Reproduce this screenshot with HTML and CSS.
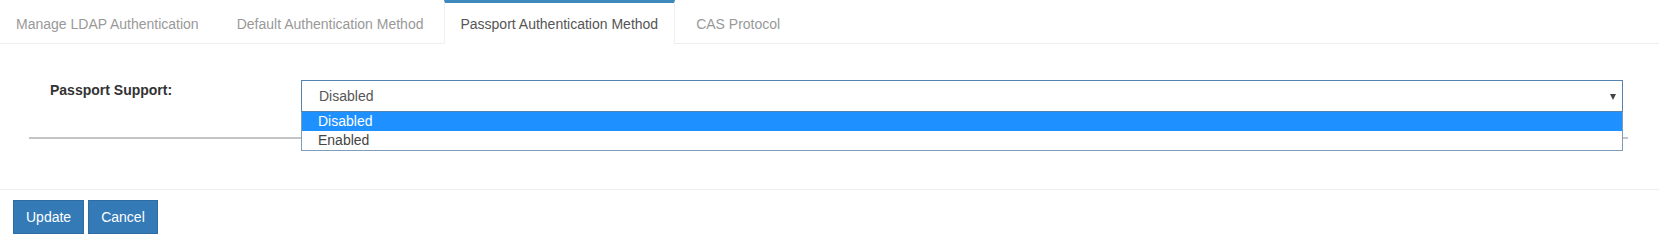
FILE: index.html
```html
<!DOCTYPE html>
<html>
<head>
<meta charset="utf-8">
<link rel="stylesheet" href="styles.css">
</head>
<body>
<div class="tabs">
  <div class="tab tab-1">Manage LDAP Authentication</div>
  <div class="tab">Default Authentication Method</div>
  <div class="tab active">Passport Authentication Method</div>
  <div class="tab">CAS Protocol</div>
</div>
<div class="content">
  <div class="form-row">
    <div class="label">Passport Support:</div>
    <div class="select">
      <div class="select-box">
        <span class="select-value">Disabled</span>
        <span class="arrow"></span>
      </div>
      <div class="options">
        <div class="option selected">Disabled</div>
        <div class="option">Enabled</div>
      </div>
    </div>
  </div>
  <div class="rule"></div>
</div>
<div class="footer">
  <button class="btn">Update</button>
  <button class="btn">Cancel</button>
</div>
</body>
</html>
```
FILE: styles.css
```css
html, body {
  margin: 0;
  padding: 0;
  background: #fff;
  font-family: "Liberation Sans", Arial, sans-serif;
}

.tabs {
  display: flex;
  border-bottom: 1px solid #eeeeee;
  height: 43px;
}

.tab {
  box-sizing: border-box;
  height: 44px;
  padding: 11px 16px 10px;
  border-top: 3px solid transparent;
  border-left: 1px solid transparent;
  border-right: 1px solid transparent;
  font-size: 14px;
  line-height: 20px;
  color: #999999;
  margin-right: 4px;
  white-space: nowrap;
}

.tab-1 {
  padding-left: 15px;
}

.tab.active {
  border-top-color: #3f88bb;
  border-left-color: #f0f0f0;
  border-right-color: #f0f0f0;
  background: #fff;
  color: #555555;
  padding-left: 15px;
}

.content {
  padding-top: 36px;
}

.form-row {
  display: flex;
  align-items: flex-start;
}

.label {
  box-sizing: border-box;
  width: 301px;
  padding-left: 50px;
  margin-top: 1px;
  font-size: 14px;
  font-weight: bold;
  line-height: 18px;
  color: #333;
}

.select {
  position: relative;
  width: 1322px;
}

.select-box {
  box-sizing: border-box;
  height: 32px;
  border: 1px solid #5585ac;
  display: flex;
  align-items: center;
  justify-content: space-between;
  padding: 0 6px 0 17px;
  font-size: 14px;
  color: #555;
}

.arrow {
  width: 0;
  height: 0;
  border-left: 3px solid transparent;
  border-right: 3px solid transparent;
  border-top: 6px solid #444;
  margin-top: 1px;
}

.options {
  position: absolute;
  top: 32px;
  left: 0;
  right: 0;
  background: #fff;
  border: 1px solid #7f9db9;
  border-top: none;
  font-size: 14px;
}

.option {
  height: 19px;
  line-height: 18px;
  padding-left: 16px;
  color: #444;
}

.option.selected {
  background: #1e90ff;
  color: #fff;
}

.rule {
  height: 2px;
  background: #c4c4c4;
  margin: 25px 31px 0 29px;
}

.footer {
  margin-top: 50px;
  border-top: 1px solid #eeeeee;
  padding: 10px 13px;
  display: flex;
  gap: 4px;
}

.btn {
  box-sizing: border-box;
  height: 34px;
  padding: 0 12px;
  background: #337ab7;
  border: 1px solid #2e6da4;
  color: #fff;
  font-family: "Liberation Sans", Arial, sans-serif;
  font-size: 14px;
  line-height: 20px;
  border-radius: 0;
}
```
